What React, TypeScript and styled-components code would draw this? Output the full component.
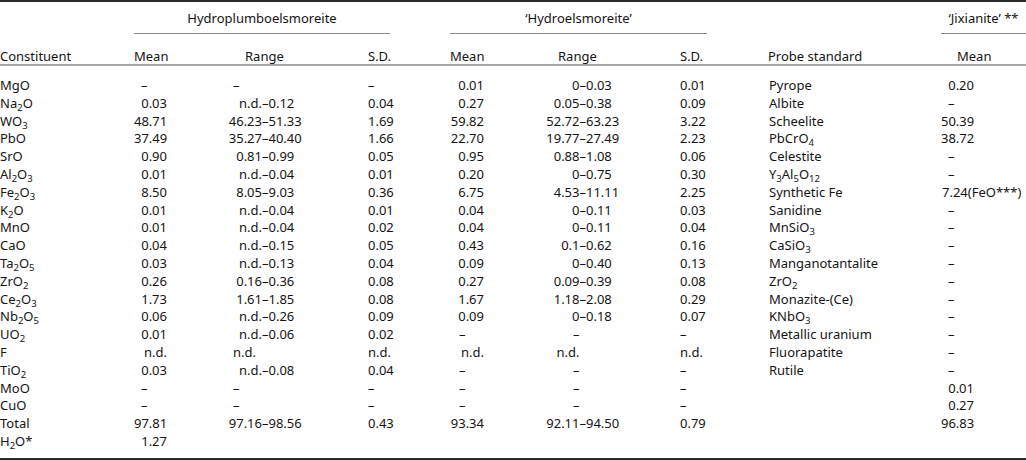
import type { ReactNode } from 'react'
import styled, { createGlobalStyle } from 'styled-components'

const GlobalStyle = createGlobalStyle`
  html, body {
    margin: 0;
    padding: 0;
    background: #ffffff;
  }
`

const COLS = '134px 34px 200px 22px 60px 34px 196px 27px 234px 85px'

const Table = styled.div`
  width: 1026px;
  height: 460px;
  box-sizing: border-box;
  display: flex;
  flex-direction: column;
  border-top: 2px solid #2b2b2b;
  border-bottom: 2px solid #2b2b2b;
  font-family: 'Noto Sans', 'Open Sans', sans-serif;
  font-size: 13px;
  line-height: 17.8px;
  color: #141414;
`

const GroupRow = styled.div`
  display: grid;
  grid-template-columns: ${COLS};
  height: 32px;
`

const GroupTitle = styled.div<{ $from: number; $to: number }>`
  grid-column: ${(p) => p.$from} / ${(p) => p.$to};
  box-sizing: border-box;
  padding-top: 8px;
  border-bottom: 1px solid #8a8a8a;
  text-align: center;
  white-space: nowrap;
`

const HeadRow = styled.div`
  display: grid;
  grid-template-columns: ${COLS};
  align-items: end;
  height: 30px;
`

const HeadCell = styled.div<{ $col: number; $pad?: number }>`
  grid-column: ${(p) => p.$col};
  padding-left: ${(p) => p.$pad ?? 0}px;
  line-height: 15px;
  white-space: nowrap;
`

const HeadRule = styled.div`
  height: 2px;
  margin-bottom: 11px;
  background: #a8a8a8;
`

const Row = styled.div`
  display: grid;
  grid-template-columns: ${COLS};
  height: 17.8px;
`

const Cell = styled.div<{ $col: number; $pad?: number }>`
  grid-column: ${(p) => p.$col};
  padding-left: ${(p) => p.$pad ?? 0}px;
  white-space: nowrap;
`

const Num = styled.div<{ $col: number; $align: 'left' | 'right'; $inset: number }>`
  grid-column: ${(p) => p.$col};
  text-align: ${(p) => p.$align};
  ${(p) => (p.$align === 'left' ? `padding-left: ${p.$inset}px;` : `padding-right: ${p.$inset}px;`)}
  white-space: nowrap;
`

const RangeCell = styled.div<{ $col: number }>`
  grid-column: ${(p) => p.$col};
  display: flex;
  white-space: nowrap;
`

const Lo = styled.span<{ $w: number; $align: 'left' | 'right'; $pad?: number }>`
  flex: none;
  box-sizing: border-box;
  width: ${(p) => p.$w}px;
  padding-left: ${(p) => p.$pad ?? 0}px;
  text-align: ${(p) => p.$align};
`

const Sub = styled.sub`
  font-size: 9.5px;
  line-height: 0;
  vertical-align: -3px;
`

type MeanSpec = { col: number; right: number; dash: number; note?: number }
type RangeSpec = { col: number; lo: number; solo: 'left' | 'right'; soloPad: number }

const MEANS: Record<string, MeanSpec> = {
  h: { col: 2, right: 1, dash: 7 },
  e: { col: 6, right: 0, dash: 9 },
  j: { col: 10, right: 52, dash: 7, note: 1 },
}

const RANGES: Record<string, RangeSpec> = {
  h: { col: 3, lo: 94, solo: 'left', soloPad: 65 },
  e: { col: 7, lo: 95.5, solo: 'right', soloPad: 0 },
}

const Mean = ({ spec, value }: { spec: MeanSpec; value: string }) => {
  if (!value) return null
  if (value === '–') {
    return (
      <Num $col={spec.col} $align="left" $inset={spec.dash}>
        {value}
      </Num>
    )
  }
  if (value.includes('(')) {
    return (
      <Num $col={spec.col} $align="left" $inset={spec.note ?? 0}>
        {value}
      </Num>
    )
  }
  return (
    <Num $col={spec.col} $align="right" $inset={spec.right}>
      {value}
    </Num>
  )
}

const Range = ({ spec, value }: { spec: RangeSpec; value: string }) => {
  if (!value) return null
  const [lo, hi] = value === '–' ? ['–', undefined] : value.split('–')
  if (hi === undefined) {
    return (
      <RangeCell $col={spec.col}>
        <Lo $w={spec.lo} $align={spec.solo} $pad={spec.soloPad}>
          {lo}
        </Lo>
      </RangeCell>
    )
  }
  return (
    <RangeCell $col={spec.col}>
      <Lo $w={spec.lo} $align="right">
        {lo}
      </Lo>
      <span>–{hi}</span>
    </RangeCell>
  )
}

type Line = {
  name: ReactNode
  h: [string, string, string]
  e: [string, string, string]
  probe: ReactNode
  j: string
}

const lines: Line[] = [
  { name: 'MgO', h: ['–', '–', '–'], e: ['0.01', '0–0.03', '0.01'], probe: 'Pyrope', j: '0.20' },
  { name: <>Na<Sub>2</Sub>O</>, h: ['0.03', 'n.d.–0.12', '0.04'], e: ['0.27', '0.05–0.38', '0.09'], probe: 'Albite', j: '–' },
  { name: <>WO<Sub>3</Sub></>, h: ['48.71', '46.23–51.33', '1.69'], e: ['59.82', '52.72–63.23', '3.22'], probe: 'Scheelite', j: '50.39' },
  { name: 'PbO', h: ['37.49', '35.27–40.40', '1.66'], e: ['22.70', '19.77–27.49', '2.23'], probe: <>PbCrO<Sub>4</Sub></>, j: '38.72' },
  { name: 'SrO', h: ['0.90', '0.81–0.99', '0.05'], e: ['0.95', '0.88–1.08', '0.06'], probe: 'Celestite', j: '–' },
  { name: <>Al<Sub>2</Sub>O<Sub>3</Sub></>, h: ['0.01', 'n.d.–0.04', '0.01'], e: ['0.20', '0–0.75', '0.30'], probe: <>Y<Sub>3</Sub>Al<Sub>5</Sub>O<Sub>12</Sub></>, j: '–' },
  { name: <>Fe<Sub>2</Sub>O<Sub>3</Sub></>, h: ['8.50', '8.05–9.03', '0.36'], e: ['6.75', '4.53–11.11', '2.25'], probe: 'Synthetic Fe', j: '7.24(FeO***)' },
  { name: <>K<Sub>2</Sub>O</>, h: ['0.01', 'n.d.–0.04', '0.01'], e: ['0.04', '0–0.11', '0.03'], probe: 'Sanidine', j: '–' },
  { name: 'MnO', h: ['0.01', 'n.d.–0.04', '0.02'], e: ['0.04', '0–0.11', '0.04'], probe: <>MnSiO<Sub>3</Sub></>, j: '–' },
  { name: 'CaO', h: ['0.04', 'n.d.–0.15', '0.05'], e: ['0.43', '0.1–0.62', '0.16'], probe: <>CaSiO<Sub>3</Sub></>, j: '–' },
  { name: <>Ta<Sub>2</Sub>O<Sub>5</Sub></>, h: ['0.03', 'n.d.–0.13', '0.04'], e: ['0.09', '0–0.40', '0.13'], probe: 'Manganotantalite', j: '–' },
  { name: <>ZrO<Sub>2</Sub></>, h: ['0.26', '0.16–0.36', '0.08'], e: ['0.27', '0.09–0.39', '0.08'], probe: <>ZrO<Sub>2</Sub></>, j: '–' },
  { name: <>Ce<Sub>2</Sub>O<Sub>3</Sub></>, h: ['1.73', '1.61–1.85', '0.08'], e: ['1.67', '1.18–2.08', '0.29'], probe: 'Monazite-(Ce)', j: '–' },
  { name: <>Nb<Sub>2</Sub>O<Sub>5</Sub></>, h: ['0.06', 'n.d.–0.26', '0.09'], e: ['0.09', '0–0.18', '0.07'], probe: <>KNbO<Sub>3</Sub></>, j: '–' },
  { name: <>UO<Sub>2</Sub></>, h: ['0.01', 'n.d.–0.06', '0.02'], e: ['–', '–', '–'], probe: 'Metallic uranium', j: '–' },
  { name: 'F', h: ['n.d.', 'n.d.', 'n.d.'], e: ['n.d.', 'n.d.', 'n.d.'], probe: 'Fluorapatite', j: '–' },
  { name: <>TiO<Sub>2</Sub></>, h: ['0.03', 'n.d.–0.08', '0.04'], e: ['–', '–', '–'], probe: 'Rutile', j: '–' },
  { name: 'MoO', h: ['–', '–', '–'], e: ['–', '–', '–'], probe: '', j: '0.01' },
  { name: 'CuO', h: ['–', '–', '–'], e: ['–', '–', '–'], probe: '', j: '0.27' },
  { name: 'Total', h: ['97.81', '97.16–98.56', '0.43'], e: ['93.34', '92.11–94.50', '0.79'], probe: '', j: '96.83' },
  { name: <>H<Sub>2</Sub>O*</>, h: ['1.27', '', ''], e: ['', '', ''], probe: '', j: '' },
]

export default function App() {
  return (
    <>
      <GlobalStyle />
      <Table>
        <GroupRow>
          <GroupTitle $from={2} $to={5}>Hydroplumboelsmoreite</GroupTitle>
          <GroupTitle $from={6} $to={9}>‘Hydroelsmoreite’</GroupTitle>
          <GroupTitle $from={10} $to={11}>‘Jixianite’ **</GroupTitle>
        </GroupRow>
        <HeadRow>
          <HeadCell $col={1}>Constituent</HeadCell>
          <HeadCell $col={2}>Mean</HeadCell>
          <HeadCell $col={3} $pad={77}>Range</HeadCell>
          <HeadCell $col={4}>S.D.</HeadCell>
          <HeadCell $col={6}>Mean</HeadCell>
          <HeadCell $col={7} $pad={74}>Range</HeadCell>
          <HeadCell $col={8}>S.D.</HeadCell>
          <HeadCell $col={9} $pad={61}>Probe standard</HeadCell>
          <HeadCell $col={10} $pad={16}>Mean</HeadCell>
        </HeadRow>
        <HeadRule />
        {lines.map((line, i) => (
          <Row key={i}>
            <Cell $col={1}>{line.name}</Cell>
            <Mean spec={MEANS.h} value={line.h[0]} />
            <Range spec={RANGES.h} value={line.h[1]} />
            {line.h[2] && <Cell $col={4}>{line.h[2]}</Cell>}
            <Mean spec={MEANS.e} value={line.e[0]} />
            <Range spec={RANGES.e} value={line.e[1]} />
            {line.e[2] && <Cell $col={8}>{line.e[2]}</Cell>}
            {line.probe && (
              <Cell $col={9} $pad={62}>
                {line.probe}
              </Cell>
            )}
            <Mean spec={MEANS.j} value={line.j} />
          </Row>
        ))}
      </Table>
    </>
  )
}
